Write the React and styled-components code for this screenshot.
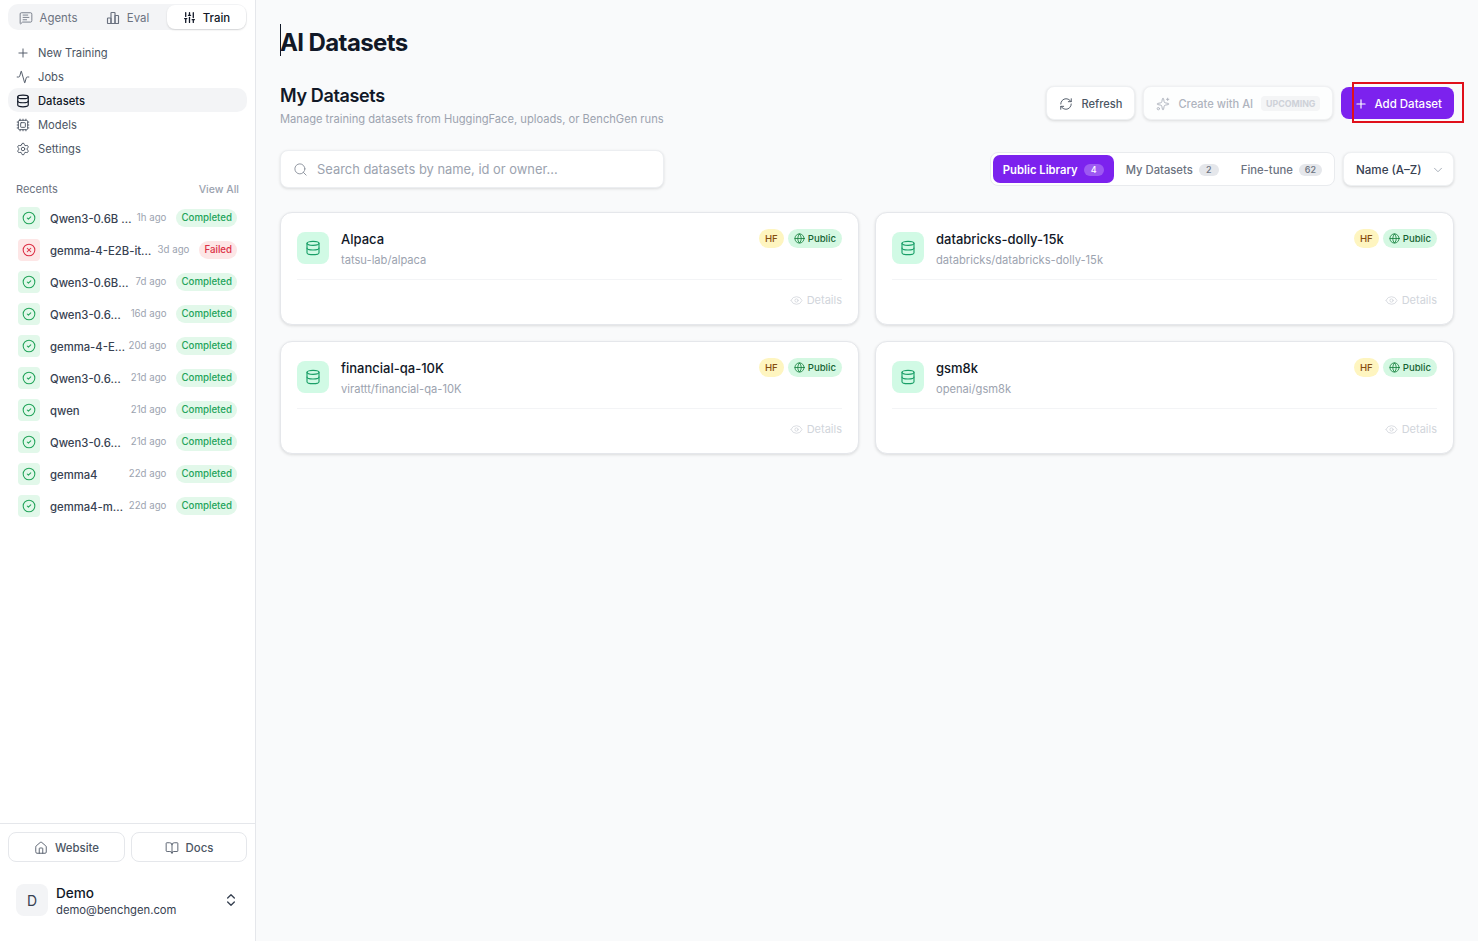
import styled, { createGlobalStyle } from 'styled-components';
import {
  BookOpen,
  ChevronDown,
  ChevronsUpDown,
  CircleCheck,
  CircleX,
  Cpu,
  Activity,
  Database,
  Eye,
  Globe,
  House,
  MessageSquareText,
  Plus,
  RefreshCw,
  Search,
  Settings,
  SlidersVertical,
  Sparkles,
} from 'lucide-react';

const GlobalStyle = createGlobalStyle`
  html, body { margin: 0; height: 100%; }
  body {
    font-family: Inter, "Noto Sans", sans-serif;
    background: #f9fafb;
    color: #111827;
  }
  * { box-sizing: border-box; }
`;

const Page = styled.div`
  display: flex;
  width: 100%;
  height: 941px;
  overflow: hidden;
  position: relative;
`;

const Sidebar = styled.aside`
  width: 256px;
  flex: none;
  display: flex;
  flex-direction: column;
  background: #fff;
  border-right: 1px solid #e5e7eb;
  padding-top: 4px;
`;

const ModeTabs = styled.div`
  display: grid;
  grid-template-columns: 80px 79px 79px;
  height: 26px;
  margin: 0 8px;
  padding: 1px 1px 1px 0;
  background: #f3f4f6;
  border-radius: 10px;
`;

const ModeTab = styled.div`
  display: flex;
  align-items: center;
  justify-content: center;
  gap: 7px;
  padding-top: 1px;
  font-size: 11.4px;
  font-weight: ${(p) => (p.$active ? 500 : 400)};
  color: ${(p) => (p.$active ? '#111827' : '#6b7280')};
  background: ${(p) => (p.$active ? '#fff' : 'transparent')};
  border-radius: 8px;
  box-shadow: ${(p) => (p.$active ? '0 1px 2px rgba(0,0,0,.14)' : 'none')};
`;

const Nav = styled.nav`
  display: flex;
  flex-direction: column;
  margin: 10px 8px 0;
`;

const NavItem = styled.div`
  display: flex;
  align-items: center;
  gap: 8px;
  height: 24px;
  padding: 2px 0 0 8px;
  font-size: 11.2px;
  font-weight: ${(p) => (p.$active ? 500 : 400)};
  color: ${(p) => (p.$active ? '#111827' : '#4b5563')};
  background: ${(p) => (p.$active ? '#f3f4f6' : 'transparent')};
  border-radius: 10px;
`;

const RecentsHead = styled.div`
  display: flex;
  justify-content: space-between;
  align-items: center;
  margin: 20px 16px 0;
  height: 18px;
  font-size: 11px;
  color: #6b7280;
`;

const ViewAll = styled.span`
  font-size: 10.5px;
  font-weight: 500;
  color: #9ca3af;
`;

const RecentList = styled.div`
  display: flex;
  flex-direction: column;
  margin: 4px 18px 0;
  flex: 1;
`;

const RecentRow = styled.div`
  display: flex;
  align-items: center;
  height: 32px;
`;

const StatusIcon = styled.div`
  width: 22px;
  height: 22px;
  flex: none;
  display: flex;
  align-items: center;
  justify-content: center;
  margin-right: 10px;
  border-radius: 4px;
  background: ${(p) => (p.$failed ? '#fde6e6' : '#e2f8ea')};
  color: ${(p) => (p.$failed ? '#dc2f45' : '#22a45a')};
`;

const RecentName = styled.span`
  flex: 1;
  min-width: 0;
  font-size: 11.3px;
  font-weight: 500;
  color: #374151;
  white-space: nowrap;
  padding-top: 1px;
`;

const RecentTime = styled.span`
  flex: none;
  margin: 0 10px 1px 0;
  font-size: 9.7px;
  color: #9ca3af;
`;

const StatusBadge = styled.span`
  flex: none;
  height: 18px;
  display: flex;
  align-items: center;
  margin-bottom: 1px;
  padding: 0 5px;
  border-radius: 9px;
  font-size: 9.7px;
  font-weight: 500;
  background: ${(p) => (p.$failed ? '#fde6e6' : '#e2f8ea')};
  color: ${(p) => (p.$failed ? '#dc2f45' : '#22a45a')};
`;

const SidebarFoot = styled.div`
  border-top: 1px solid #e5e7eb;
  padding: 8px 8px 23px;
`;

const LinkRow = styled.div`
  display: grid;
  grid-template-columns: 117px 116px;
  gap: 6px;
`;

const LinkButton = styled.div`
  height: 30px;
  display: flex;
  align-items: center;
  justify-content: center;
  gap: 7px;
  padding-top: 1px;
  font-size: 11.4px;
  font-weight: 500;
  color: #4b5563;
  background: #fff;
  border: 1px solid #e5e7eb;
  border-radius: 8px;
`;

const UserRow = styled.div`
  display: flex;
  align-items: center;
  gap: 8px;
  margin-top: 20px;
  padding: 0 8px;
`;

const Avatar = styled.div`
  width: 32px;
  height: 32px;
  display: flex;
  align-items: center;
  justify-content: center;
  background: #f3f4f6;
  border-radius: 8px;
  font-size: 14px;
  color: #374151;
`;

const UserText = styled.div`
  flex: 1;
  display: flex;
  flex-direction: column;
  gap: 2px;
  padding-top: 3px;
`;

const UserName = styled.span`
  font-size: 13.6px;
  font-weight: 500;
  line-height: 16px;
  color: #111827;
`;

const UserMail = styled.span`
  font-size: 11.25px;
  line-height: 15px;
  color: #374151;
`;

const Main = styled.main`
  flex: 1;
  min-width: 0;
  padding: 24px 24px 0;
`;

const Title = styled.h1`
  position: relative;
  margin: 0;
  height: 32px;
  font-size: 24px;
  line-height: 38px;
  font-weight: 700;
  letter-spacing: -0.025em;
  color: #111827;

  &::before {
    content: '';
    position: absolute;
    left: 0;
    top: 0;
    width: 1px;
    height: 32px;
    background: #111827;
  }
`;

const HeaderRow = styled.div`
  display: flex;
  justify-content: space-between;
  align-items: flex-start;
  margin-top: 28px;
`;

const HeaderText = styled.div`
  display: flex;
  flex-direction: column;
`;

const Heading = styled.h2`
  margin: 0;
  font-size: 18px;
  line-height: 24px;
  font-weight: 600;
  letter-spacing: -0.02em;
  color: #111827;
`;

const Subtitle = styled.p`
  margin: 3px 0 0;
  font-size: 11.15px;
  line-height: 16px;
  color: #9ca3af;
`;

const Actions = styled.div`
  display: flex;
  align-items: center;
  gap: 8px;
  margin-top: 2px;
`;

const Button = styled.div`
  display: flex;
  align-items: center;
  gap: 8px;
  height: 34px;
  padding: 1px 12px 0;
  font-size: 11.1px;
  font-weight: 500;
  border-radius: 8px;
  background: #fff;
  color: ${(p) => (p.$disabled ? '#9ca3af' : '#4b5563')};
  border: 1px solid #eef0f2;
  box-shadow: 0 1px 3px rgba(0, 0, 0, 0.14);
  opacity: ${(p) => (p.$disabled ? 0.8 : 1)};
`;

const PrimaryButton = styled(Button)`
  height: 32px;
  padding: 1px 12px 0 13px;
  gap: 6px;
  font-size: 11.5px;
  background: #7c22ee;
  color: #fff;
  border: none;
  box-shadow: none;
`;

const UpcomingTag = styled.span`
  padding: 2px 5px;
  border-radius: 4px;
  background: #f3f4f6;
  font-size: 8.8px;
  font-weight: 700;
  color: #c4c8d0;
`;

const FilterRow = styled.div`
  display: flex;
  align-items: center;
  justify-content: space-between;
  margin-top: 23px;
`;

const SearchBox = styled.div`
  width: 384px;
  height: 38px;
  display: flex;
  align-items: center;
  gap: 9px;
  padding: 0 12px;
  background: #fff;
  border: 1px solid #eceef1;
  border-radius: 8px;
  box-shadow: 0 1px 3px rgba(0, 0, 0, 0.12);
  font-size: 12.9px;
  color: #9ca3af;
`;

const Filters = styled.div`
  display: flex;
  align-items: center;
  gap: 8px;
`;

const Segments = styled.div`
  display: flex;
  align-items: center;
  height: 34px;
  padding: 2px;
  background: #fff;
  border: 1px solid #e9ebee;
  border-radius: 8px;
`;

const Segment = styled.div`
  display: flex;
  align-items: center;
  gap: 6px;
  height: 28px;
  padding: 1px 10px 0 ${(p) => (p.$active ? 10 : 12)}px;
  border-radius: 7px;
  font-size: 11.25px;
  font-weight: ${(p) => (p.$active ? 600 : 500)};
  color: ${(p) => (p.$active ? '#fff' : '#6b7280')};
  background: ${(p) => (p.$active ? '#7c22ee' : 'transparent')};
`;

const Count = styled.span`
  height: 12px;
  min-width: 20px;
  padding: 0 6px;
  display: flex;
  align-items: center;
  justify-content: center;
  border-radius: 6px;
  font-size: 9px;
  font-weight: 500;
  color: ${(p) => (p.$active ? '#fff' : '#6b7280')};
  background: ${(p) => (p.$active ? 'rgba(255,255,255,.25)' : '#e5e7eb')};
`;

const SortSelect = styled.div`
  width: 111px;
  height: 34px;
  display: flex;
  align-items: center;
  justify-content: space-between;
  padding: 1px 8px 0 12px;
  background: #fff;
  border: 1px solid #eef0f2;
  border-radius: 8px;
  box-shadow: 0 1px 3px rgba(0, 0, 0, 0.14);
  font-size: 11.6px;
  font-weight: 500;
  color: #374151;
`;

const CardGrid = styled.div`
  display: grid;
  grid-template-columns: repeat(2, 579px);
  gap: 16px;
  margin-top: 24px;
`;

const Card = styled.article`
  height: 113px;
  padding: 19px 16px 0;
  background: #fff;
  border: 1px solid #e5e7eb;
  border-radius: 12px;
  box-shadow: 0 1px 3px rgba(0, 0, 0, 0.12);
`;

const CardTop = styled.div`
  display: flex;
  align-items: flex-start;
  gap: 12px;
  height: 48px;
  border-bottom: 1px solid #f3f4f6;
`;

const CardIcon = styled.div`
  width: 32px;
  height: 32px;
  flex: none;
  display: flex;
  align-items: center;
  justify-content: center;
  border-radius: 8px;
  background: #d1fae5;
  color: #1a9f68;
`;

const CardText = styled.div`
  flex: 1;
  display: flex;
  flex-direction: column;
`;

const CardName = styled.span`
  margin-top: -1px;
  font-size: 13px;
  font-weight: 500;
  line-height: 16px;
  color: #111827;
`;

const CardPath = styled.span`
  margin-top: 5px;
  font-size: 11.15px;
  line-height: 16px;
  color: #9ca3af;
`;

const Tags = styled.div`
  display: flex;
  gap: 4px;
  margin-top: -3px;
`;

const Tag = styled.span`
  display: flex;
  align-items: center;
  gap: 3px;
  height: 19px;
  padding: 0 6px;
  border-radius: 10px;
  font-size: 9.6px;
  font-weight: 500;
  background: ${(p) => (p.$yellow ? '#fef5c0' : '#d4f8e2')};
  color: ${(p) => (p.$yellow ? '#854d0e' : '#166534')};
`;

const CardFoot = styled.div`
  display: flex;
  justify-content: flex-end;
  align-items: center;
  gap: 4px;
  height: 40px;
  font-size: 11px;
  color: #d1d5db;
`;

// the red box drawn over the screenshot, not part of the app layout
const Highlight = styled.div`
  position: absolute;
  left: 1352px;
  top: 82px;
  width: 112px;
  height: 41px;
  border: 2px solid #e0101a;
  pointer-events: none;
`;

function EvalIcon() {
  return (
    <svg width="14" height="14" viewBox="0 0 14 14" fill="none" stroke="currentColor" strokeWidth="1.15">
      <rect x="1.5" y="7" width="3.5" height="5.5" rx="0.6" />
      <rect x="5" y="1.5" width="4" height="11" rx="0.6" />
      <rect x="9" y="4.5" width="3.5" height="8" rx="0.6" />
    </svg>
  );
}

const recents = [
  ['Qwen3-0.6B …', '1h ago'],
  ['gemma-4-E2B-it…', '3d ago', true],
  ['Qwen3-0.6B…', '7d ago'],
  ['Qwen3-0.6…', '16d ago'],
  ['gemma-4-E…', '20d ago'],
  ['Qwen3-0.6…', '21d ago'],
  ['qwen', '21d ago'],
  ['Qwen3-0.6…', '21d ago'],
  ['gemma4', '22d ago'],
  ['gemma4-m…', '22d ago'],
];

const datasets = [
  ['Alpaca', 'tatsu-lab/alpaca'],
  ['databricks-dolly-15k', 'databricks/databricks-dolly-15k'],
  ['financial-qa-10K', 'virattt/financial-qa-10K'],
  ['gsm8k', 'openai/gsm8k'],
];

export default function App() {
  return (
    <Page>
      <GlobalStyle />
      <Sidebar>
        <ModeTabs>
          <ModeTab>
            <MessageSquareText size={14} strokeWidth={1.5} />
            Agents
          </ModeTab>
          <ModeTab>
            <EvalIcon />
            Eval
          </ModeTab>
          <ModeTab $active>
            <SlidersVertical size={13} strokeWidth={2.4} />
            Train
          </ModeTab>
        </ModeTabs>
        <Nav>
          <NavItem>
            <Plus size={14} strokeWidth={1.6} />
            New Training
          </NavItem>
          <NavItem>
            <Activity size={14} strokeWidth={1.6} />
            Jobs
          </NavItem>
          <NavItem $active>
            <Database size={14} strokeWidth={2} />
            Datasets
          </NavItem>
          <NavItem>
            <Cpu size={14} strokeWidth={1.6} />
            Models
          </NavItem>
          <NavItem>
            <Settings size={14} strokeWidth={1.6} />
            Settings
          </NavItem>
        </Nav>
        <RecentsHead>
          Recents
          <ViewAll>View All</ViewAll>
        </RecentsHead>
        <RecentList>
          {recents.map(([name, time, failed], i) => (
            <RecentRow key={i}>
              <StatusIcon $failed={failed}>
                {failed ? <CircleX size={14} strokeWidth={1.8} /> : <CircleCheck size={14} strokeWidth={1.8} />}
              </StatusIcon>
              <RecentName>{name}</RecentName>
              <RecentTime>{time}</RecentTime>
              <StatusBadge $failed={failed}>{failed ? 'Failed' : 'Completed'}</StatusBadge>
            </RecentRow>
          ))}
        </RecentList>
        <SidebarFoot>
          <LinkRow>
            <LinkButton>
              <House size={14} strokeWidth={1.5} />
              Website
            </LinkButton>
            <LinkButton>
              <BookOpen size={14} strokeWidth={1.5} />
              Docs
            </LinkButton>
          </LinkRow>
          <UserRow>
            <Avatar>D</Avatar>
            <UserText>
              <UserName>Demo</UserName>
              <UserMail>demo@benchgen.com</UserMail>
            </UserText>
            <ChevronsUpDown size={16} strokeWidth={2} color="#374151" />
          </UserRow>
        </SidebarFoot>
      </Sidebar>

      <Main>
        <Title>AI Datasets</Title>
        <HeaderRow>
          <HeaderText>
            <Heading>My Datasets</Heading>
            <Subtitle>Manage training datasets from HuggingFace, uploads, or BenchGen runs</Subtitle>
          </HeaderText>
          <Actions>
            <Button>
              <RefreshCw size={14} strokeWidth={1.6} />
              Refresh
            </Button>
            <Button $disabled>
              <Sparkles size={14} strokeWidth={1.6} />
              Create with AI
              <UpcomingTag>UPCOMING</UpcomingTag>
            </Button>
            <PrimaryButton>
              <Plus size={14} strokeWidth={2} />
              Add Dataset
            </PrimaryButton>
          </Actions>
        </HeaderRow>
        <FilterRow>
          <SearchBox>
            <Search size={15} strokeWidth={1.5} color="#8b919c" />
            Search datasets by name, id or owner...
          </SearchBox>
          <Filters>
            <Segments>
              <Segment $active>
                Public Library <Count $active>4</Count>
              </Segment>
              <Segment>
                My Datasets <Count>2</Count>
              </Segment>
              <Segment>
                Fine-tune <Count>62</Count>
              </Segment>
            </Segments>
            <SortSelect>
              Name (A–Z)
              <ChevronDown size={14} strokeWidth={1.5} color="#9ca3af" />
            </SortSelect>
          </Filters>
        </FilterRow>
        <CardGrid>
          {datasets.map(([name, path]) => (
            <Card key={name}>
              <CardTop>
                <CardIcon>
                  <Database size={16} strokeWidth={1.7} />
                </CardIcon>
                <CardText>
                  <CardName>{name}</CardName>
                  <CardPath>{path}</CardPath>
                </CardText>
                <Tags>
                  <Tag $yellow>HF</Tag>
                  <Tag>
                    <Globe size={11} strokeWidth={1.8} color="#15803d" />
                    Public
                  </Tag>
                </Tags>
              </CardTop>
              <CardFoot>
                <Eye size={13} strokeWidth={1.5} />
                Details
              </CardFoot>
            </Card>
          ))}
        </CardGrid>
      </Main>
      <Highlight />
    </Page>
  );
}
